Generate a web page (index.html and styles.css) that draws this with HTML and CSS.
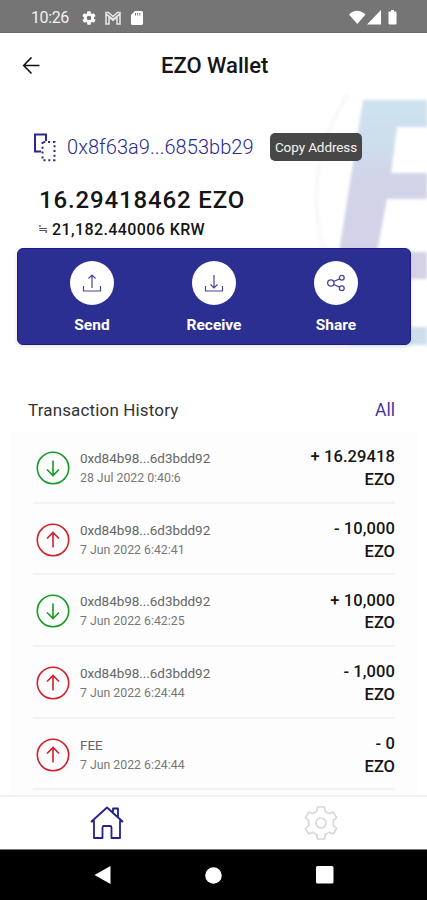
FILE: index.html
```
<!DOCTYPE html>
<html lang="en">
<head>
<meta charset="utf-8">
<title>EZO Wallet</title>
<link rel="stylesheet" href="styles.css">
</head>
<body>
<svg width="0" height="0" class="defs">
  <symbol id="in" viewBox="0 0 34 34"><g fill="none" stroke="currentColor" stroke-width="1.6"><circle cx="17" cy="17" r="15.7"/><path d="M17 9.5v15M11 18.5l6 6 6-6"/></g></symbol>
  <symbol id="out" viewBox="0 0 34 34"><g fill="none" stroke="currentColor" stroke-width="1.6"><circle cx="17" cy="17" r="15.7"/><path d="M17 24.5v-15M11 15.5l6-6 6 6"/></g></symbol>
</svg>
<div class="phone">
  <header class="status">
    <span class="clock">10:26</span>
    <svg class="s-gear" width="16" height="16" viewBox="0 0 24 24"><path fill="#fff" fill-rule="evenodd" d="M19.4 13c0-.3.1-.6.1-1s0-.7-.1-1l2.1-1.6c.2-.2.2-.4.1-.6l-2-3.5c-.1-.2-.4-.3-.6-.2l-2.5 1c-.5-.4-1.100-.7-1.700-1l-.4-2.600c0-.3-.2-.5-.5-.5h-4c-.3 0-.5.2-.5.5L9 5.100c-.6.3-1.200.6-1.700 1l-2.500-1c-.2-.1-.5 0-.6.2l-2 3.500c-.1.200-.1.500.1.600L4.500 11c0 .3-.1.700-.1 1s0 .7.1 1l-2.100 1.600c-.2.2-.2.400-.1.600l2 3.500c.1.200.4.300.6.200l2.500-1c.5.400 1.100.7 1.700 1l.4 2.600c0 .3.200.5.500.5h4c.3 0 .5-.2.5-.5l.4-2.600c.6-.3 1.200-.6 1.700-1l2.500 1c.2.100.5 0 .6-.2l2-3.500c.1-.2.100-.5-.1-.6zM12 15.500a3.500 3.500 0 1 1 0-7 3.500 3.500 0 0 1 0 7z"/></svg>
    <svg class="s-mail" width="16" height="14" viewBox="0 0 16 14"><path fill="none" stroke="#e4e4e4" stroke-width="1.600" d="M1 13V1.500h2.500L8 5.500l4.500-4H15V13h-3V6L8 9.500 4 6v7zM1 3l7 5.500L15 3"/></svg>
    <svg class="s-card" width="12" height="14" viewBox="0 0 12 14"><path fill="#fff" fill-rule="evenodd" d="M4 0h6.500Q12 0 12 1.500v11Q12 14 10.500 14h-9Q0 14 0 12.500V4zM4 2v2.500h1V2zm2.200 0v2.500h1V2zm2.200 0v2.500h1V2z"/></svg>
    <svg class="s-right" width="49" height="15" viewBox="0 0 49 15"><g fill="#fff"><path d="M0 4.500Q8 -3 16.500 4.500L8.300 14z"/><path d="M32 0v14.500H18z"/><path d="M42 1.500V0h3v1.500h1.500q1 0 1 1v11q0 1-1 1h-6q-1 0-1-1v-11q0-1 1-1z"/></g></svg>
  </header>
  <div class="titlebar">
    <svg class="back" width="18" height="18" viewBox="0 0 18 18"><path fill="none" stroke="#111" stroke-width="1.600" d="M17.500 8.500H2M9.500 .5L1.700 8.500l7.800 8"/></svg>
    <h1>EZO Wallet</h1>
  </div>
  <svg class="mark" width="127" height="270" viewBox="300 90 127 270">
    <defs><linearGradient id="g" x1="0" y1="98" x2="0" y2="345" gradientUnits="userSpaceOnUse"><stop offset="0" stop-color="#cde2ef"/><stop offset=".2" stop-color="#cdddec"/><stop offset=".33" stop-color="#d2d3e7"/><stop offset=".72" stop-color="#d5d1e8"/><stop offset="1" stop-color="#cbe0ee"/></linearGradient></defs>
    <path d="M348 94Q302 165 323 248" fill="none" stroke="#f8f8fb" stroke-width="4"/>
    <path fill="url(#g)" d="M363 100H440V127H397L391 173H440V199H387L377 252H440V279H400V327H440V345H350L339 252z"/>
  </svg>
  <section class="account">
    <div class="address">
      <svg class="copy" width="23" height="29" viewBox="0 0 23 29"><g fill="none" stroke="#29298f"><path stroke-width="2" d="M8 18.500H2V1.500h11V8"/><path stroke-width="2" stroke-dasharray="2 2.800" d="M9.500 9v18.200h12V9z"/></g></svg>
      <span class="hash">0x8f63a9...6853bb29</span>
      <span class="tip">Copy Address</span>
    </div>
    <div class="balance">16.29418462 EZO</div>
    <div class="fiat"><span class="approx">≒</span><span class="krw">21,182.440006 KRW</span></div>
  </section>
  <nav class="actions">
    <div class="action"><span class="disc"><svg width="20" height="20" viewBox="0 0 20 20"><path fill="none" stroke="#4b4596" stroke-width="1.200" d="M10 15V2.500M6.500 5.500L10 2l3.500 3.500M1.500 13v5h17v-5"/></svg></span><span>Send</span></div>
    <div class="action"><span class="disc"><svg width="20" height="20" viewBox="0 0 20 20"><path fill="none" stroke="#4b4596" stroke-width="1.200" d="M10 2v12.500M6.500 11.500L10 15l3.500-3.500M1.500 13v5h17v-5"/></svg></span><span>Receive</span></div>
    <div class="action"><span class="disc"><svg width="20" height="20" viewBox="0 0 20 20"><g fill="none" stroke="#4b4596" stroke-width="1.300"><circle cx="4.800" cy="10" r="3.200"/><circle cx="15.800" cy="4.800" r="2.400"/><circle cx="15.800" cy="15.200" r="2.400"/><path d="M7.700 8.500l6-2.700M7.700 11.500l6 2.700"/></g></svg></span><span>Share</span></div>
  </nav>
  <div class="heading"><h2>Transaction History</h2><a>All</a></div>
  <main class="list">
    <article class="tx"><svg class="green"><use href="#in"/></svg><div class="info"><b>0xd84b98...6d3bdd92</b><time>28 Jul 2022 0:40:6</time></div><div class="amount">+ 16.29418<br><i>EZO</i></div></article>
    <article class="tx"><svg class="red"><use href="#out"/></svg><div class="info"><b>0xd84b98...6d3bdd92</b><time>7 Jun 2022 6:42:41</time></div><div class="amount">- 10,000<br><i>EZO</i></div></article>
    <article class="tx"><svg class="green"><use href="#in"/></svg><div class="info"><b>0xd84b98...6d3bdd92</b><time>7 Jun 2022 6:42:25</time></div><div class="amount">+ 10,000<br><i>EZO</i></div></article>
    <article class="tx"><svg class="red"><use href="#out"/></svg><div class="info"><b>0xd84b98...6d3bdd92</b><time>7 Jun 2022 6:24:44</time></div><div class="amount">- 1,000<br><i>EZO</i></div></article>
    <article class="tx"><svg class="red"><use href="#out"/></svg><div class="info"><b>FEE</b><time>7 Jun 2022 6:24:44</time></div><div class="amount">- 0<br><i>EZO</i></div></article>
  </main>
  <nav class="tabs">
    <svg width="34" height="34" viewBox="0 0 34 34"><path fill="none" stroke="#22228f" stroke-width="1.800" stroke-linejoin="round" d="M4 15L1.500 15.500 17 1.500 32.500 15.500 30 15V32H21.500V21.500Q21.500 20 20 20H14Q12.500 20 12.500 21.500V32H4zM23 6.500V2.500h5V11"/></svg>
    <svg class="gear" width="34" height="36" viewBox="0 0 34 36"><g fill="none" stroke="#d8d8d8" stroke-width="1.700" stroke-linejoin="round"><path d="M13.500 2h7l.8 4.500q2 .8 3.700 2.200l4.300-1.600 3.300 5.600-3.500 3q.4 2.300 0 4.600l3.500 3-3.300 5.600-4.300-1.600q-1.700 1.400-3.700 2.200L20.500 34h-7l-.8-4.500q-2-.8-3.700-2.200l-4.300 1.600-3.300-5.600 3.500-3q-.4-2.300 0-4.600l-3.500-3 3.300-5.600L9 8.700q1.700-1.400 3.700-2.200z"/><circle cx="17" cy="18" r="5"/></g></svg>
  </nav>
  <footer class="system">
    <svg width="17" height="20" viewBox="0 0 17 20"><path fill="#fff" d="M0.500 10L16.500 1v18z"/></svg>
    <svg width="17" height="17" viewBox="0 0 17 17"><circle cx="8.500" cy="8.500" r="8.300" fill="#fff"/></svg>
    <svg width="18" height="18" viewBox="0 0 18 18"><rect width="17.500" height="17.500" rx="1.500" fill="#fff"/></svg>
  </footer>
</div>
</body>
</html>
```
FILE: styles.css
```
* { box-sizing: border-box; margin: 0; padding: 0; }
body { background: #fff; font-family: Roboto, "Noto Sans CJK JP", sans-serif; color: #151515; }
svg { display: block; flex: none; }
.defs { position: absolute; }
.phone { position: relative; width: 427px; height: 900px; overflow: hidden; display: flex; flex-direction: column; }
.phone > * { flex: none; }
.status { height: 33px; background: #757575; display: flex; align-items: center; padding: 3px 29px 0 31px; border-bottom: 1px solid #6a6a6a; }
.clock { width: 50px; color: #f2f2f2; font-size: 16px; letter-spacing: -.4px; }
.s-mail { margin-left: 8px; }
.s-card { margin-left: 10px; }
.s-right { margin-left: auto; }
.titlebar { height: 64px; display: grid; grid-template-columns: 139px 1fr; align-items: center; padding: 1px 0 0 22px; }
h1 { font-size: 22px; line-height: 26px; font-weight: 500; }
.mark { position: absolute; left: 300px; top: 90px; filter: blur(1.5px); }
.account { position: relative; height: 151px; padding: 35px 0 0 33px; }
.address { display: flex; align-items: center; height: 30px; }
.hash { margin-left: 11px; width: 187px; font-size: 20px; letter-spacing: .05px; color: #29298f; white-space: nowrap; font-weight: 300; }
.tip { margin-left: 16px; width: 92px; height: 28px; line-height: 28px; background: #474747; border-radius: 5px; color: #f5f5f5; font-size: 13.5px; letter-spacing: -.1px; text-align: center; white-space: nowrap; }
.balance { margin: 23px 0 0 6px; font-size: 24px; line-height: 30px; font-weight: 500; letter-spacing: .85px; white-space: nowrap; }
.fiat { margin: 5px 0 0 5px; display: flex; align-items: center; height: 18px; font-size: 16px; font-weight: 500; letter-spacing: .4px; }
.approx { width: 14px; font-size: 12px; color: #555; font-weight: 400; }
.actions { position: relative; height: 97px; margin: 0 16px 0 17px; padding: 12px 13px 0; background: #2c2f92; border: 1px solid #1b1b8a; border-radius: 6px; box-shadow: 0 2px 5px #bbb6; display: grid; grid-template-columns: repeat(3, 1fr); }
.action { display: flex; flex-direction: column; align-items: center; gap: 10px; color: #fff; font-size: 15.5px; font-weight: 700; line-height: 20px; }
.disc { width: 44px; height: 44px; border-radius: 50%; background: #fff; display: grid; place-items: center; }
.heading { height: 87px; padding: 53px 32px 0 28px; display: flex; justify-content: space-between; line-height: 24px; }
h2 { font-size: 17px; font-weight: 400; letter-spacing: .15px; color: #333; }
.heading a { font-size: 17.5px; color: #3f389b; }
.list { height: 363px; margin: 0 9px; background: #fdfdfd; padding: 0 23px 0 24px; overflow: hidden; }
.tx { height: 71.7px; border-bottom: 2px solid #f3f3f3; display: flex; align-items: center; padding-top: 2px; }
.tx svg { width: 34px; height: 34px; margin-left: 3px; }
.green { color: #159a25; }
.red { color: #d3202c; }
.info { margin-left: 10px; display: flex; flex-direction: column; line-height: 20px; color: #666; white-space: nowrap; }
.info b { font-size: 13.5px; font-weight: 400; letter-spacing: -.05px; }
.info time { font-size: 12.3px; color: #777; }
.amount { margin-left: auto; padding-top: 2px; text-align: right; font-size: 16.500px; line-height: 22.500px; font-weight: 500; letter-spacing: .1px; }
.amount i { font-style: normal; letter-spacing: 0; }
.tabs { height: 54px; border-top: 2px solid #f2f2f2; background: #fff; display: grid; grid-template-columns: 1fr 1fr; place-items: center; }
.gear { margin-left: 1px; }
.system { height: 51px; background: #000; border-top: 1px solid #777; display: flex; align-items: center; justify-content: space-between; padding: 0 93px 0 94px; }
```
